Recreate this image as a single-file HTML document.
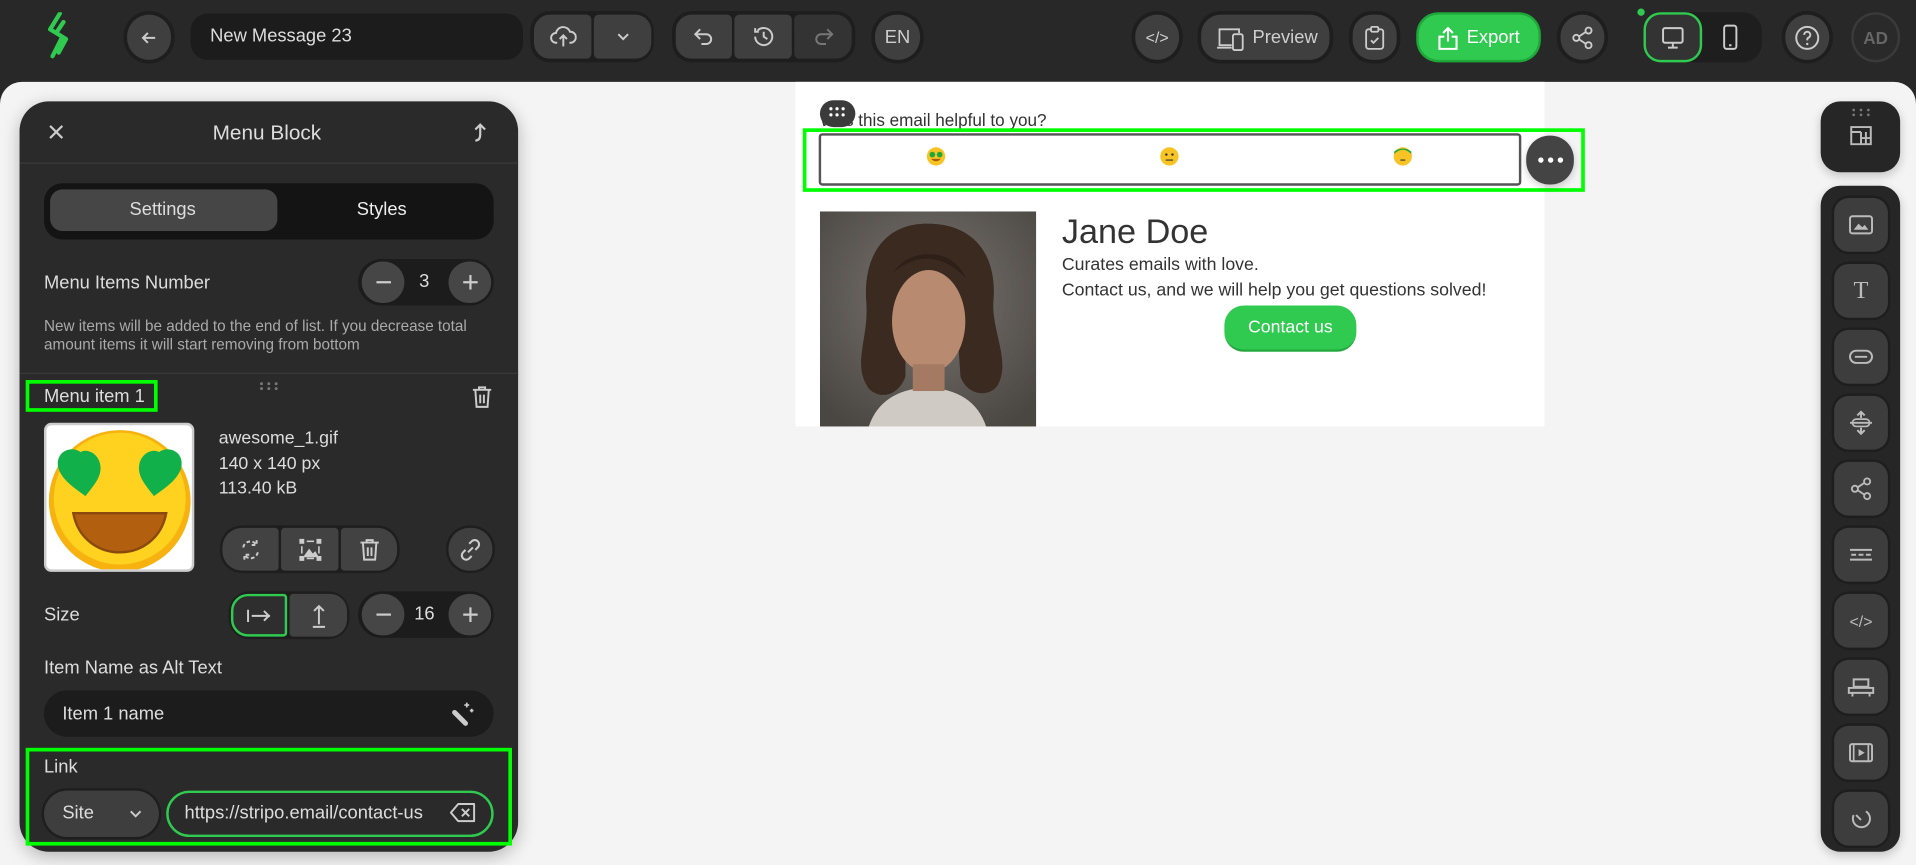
<!DOCTYPE html>
<html><head><meta charset="utf-8"><style>
*{box-sizing:border-box;margin:0;padding:0}
html,body{width:1916px;height:865px;overflow:hidden;background:#282828}
#root{position:absolute;left:0;top:0;width:1568px;height:708px;transform:scale(1.221939);transform-origin:0 0;background:#282828;font-family:"Liberation Sans",Arial,sans-serif;color:#ddd}
.a{position:absolute}
.btn{position:absolute;background:#3f3f3f;border-radius:14px;box-shadow:0 0 0 3px #1e1e1e;display:flex;align-items:center;justify-content:center;color:#cfcfcf}
.grp{position:absolute;background:#1e1e1e;border-radius:16px}
.t{position:absolute;white-space:nowrap}
svg{display:block}
.sb{position:absolute;left:1501px;width:44px;height:44px;background:#3d3d3d;border-radius:12px;box-shadow:0 0 0 2px #1e1e1e;display:flex;align-items:center;justify-content:center}
</style></head><body><div id="root">
<!-- top bar -->
<svg class="a" style="left:38px;top:10px" width="20" height="38" viewBox="0 0 20 38"><path d="M11 1 L3 14 L13 20 L5 36 M14 8 L8 17 L16 22 L10 33" stroke="#2fca4f" stroke-width="3.5" fill="none" stroke-linecap="round" stroke-linejoin="round"/></svg>
<div class="btn" style="left:104px;top:12px;width:36px;height:37px;border-radius:18px"><svg width="14" height="14" viewBox="0 0 14 14"><path d="M12 7H2M6 3L2 7l4 4" stroke="#ccc" stroke-width="1.6" fill="none"/></svg></div>
<div class="a" style="left:156px;top:11px;width:272px;height:38px;background:#1c1c1c;border-radius:14px"></div>
<div class="t" style="left:172px;top:21px;font-size:15px;color:#ddd">New Message 23</div>
<div class="grp" style="left:434px;top:9px;width:101px;height:42px"></div>
<div class="btn" style="left:437px;top:12px;width:47px;height:36px;box-shadow:none;border-radius:13px 4px 4px 13px"><svg width="22" height="20" viewBox="0 0 22 20"><path d="M6 15H5a4 4 0 0 1 0-8 6 6 0 0 1 11.5-1A4.5 4.5 0 0 1 17 15h-1M11 18V9M8 12l3-3 3 3" stroke="#ccc" stroke-width="1.6" fill="none"/></svg></div>
<div class="btn" style="left:486px;top:12px;width:47px;height:36px;box-shadow:none;border-radius:4px 13px 13px 4px"><svg width="12" height="8" viewBox="0 0 12 8"><path d="M2 2l4 4 4-4" stroke="#ccc" stroke-width="1.6" fill="none"/></svg></div>
<div class="grp" style="left:550px;top:9px;width:150px;height:42px"></div>
<div class="btn" style="left:553px;top:12px;width:46px;height:36px;box-shadow:none;border-radius:13px 4px 4px 13px"><svg width="18" height="18" viewBox="0 0 18 18"><path d="M6 3L2 7l4 4M2 7h9a4 4 0 0 1 0 8H7" stroke="#ccc" stroke-width="1.6" fill="none"/></svg></div>
<div class="btn" style="left:601px;top:12px;width:47px;height:36px;box-shadow:none;border-radius:4px"><svg width="20" height="20" viewBox="0 0 20 20"><path d="M3 10a7 7 0 1 0 2-5M3 3v3h3M10 6v4l3 2" stroke="#ccc" stroke-width="1.6" fill="none"/></svg></div>
<div class="btn" style="left:650px;top:12px;width:47px;height:36px;box-shadow:none;border-radius:4px 13px 13px 4px;background:#333"><svg width="18" height="18" viewBox="0 0 18 18"><path d="M12 3l4 4-4 4M16 7H7a4 4 0 0 0 0 8h4" stroke="#777" stroke-width="1.6" fill="none"/></svg></div>
<div class="btn" style="left:716px;top:12px;width:37px;height:37px;border-radius:18px;font-size:15px">EN</div>

<div class="btn" style="left:929px;top:12px;width:36px;height:37px;border-radius:18px;font-size:13px">&lt;/&gt;</div>
<div class="btn" style="left:983px;top:12px;width:105px;height:37px;border-radius:16px;font-size:15px;justify-content:flex-start;padding-left:12px"><svg width="24" height="22" viewBox="0 0 24 22" style="margin-right:6px"><path d="M13 17H3V4h16v3M1 19h12" stroke="#ccc" stroke-width="1.5" fill="none"/><rect x="14" y="8" width="8" height="13" rx="1.5" stroke="#ccc" stroke-width="1.5" fill="none"/></svg>Preview</div>
<div class="btn" style="left:1107px;top:12px;width:36px;height:37px;border-radius:16px"><svg width="16" height="20" viewBox="0 0 16 20"><rect x="1" y="3" width="14" height="16" rx="2" stroke="#ccc" stroke-width="1.5" fill="none"/><rect x="5" y="1" width="6" height="4" rx="1" stroke="#ccc" stroke-width="1.5" fill="#3f3f3f"/><path d="M5 12l2 2 4-4" stroke="#ccc" stroke-width="1.5" fill="none"/></svg></div>
<div class="btn" style="left:1161px;top:12px;width:98px;height:37px;border-radius:16px;background:#2fca4f;box-shadow:0 0 0 2px #1fa83a;color:#fff;font-size:15px"><svg width="18" height="20" viewBox="0 0 18 20" style="margin-right:6px"><path d="M9 13V2M5 6l4-4 4 4M6 9H2v10h14V9h-4" stroke="#fff" stroke-width="1.7" fill="none"/></svg>Export</div>
<div class="btn" style="left:1277px;top:12px;width:36px;height:37px;border-radius:18px"><svg width="20" height="20" viewBox="0 0 20 20"><circle cx="15" cy="4" r="2.5" stroke="#ccc" stroke-width="1.5" fill="none"/><circle cx="5" cy="10" r="2.5" stroke="#ccc" stroke-width="1.5" fill="none"/><circle cx="15" cy="16" r="2.5" stroke="#ccc" stroke-width="1.5" fill="none"/><path d="M7 9l6-4M7 11l6 4" stroke="#ccc" stroke-width="1.5"/></svg></div>
<div class="a" style="left:1340px;top:7px;width:6px;height:6px;border-radius:3px;background:#2fca4f"></div>
<div class="grp" style="left:1345px;top:10px;width:97px;height:41px"></div>
<div class="btn" style="left:1347px;top:12px;width:44px;height:37px;border-radius:12px;background:#333;box-shadow:0 0 0 2px #2fca4f"><svg width="20" height="20" viewBox="0 0 20 20"><rect x="2" y="2" width="16" height="12" rx="1.5" stroke="#ccc" stroke-width="1.6" fill="none"/><path d="M10 14v4M6 18h8" stroke="#ccc" stroke-width="1.6"/></svg></div>
<div class="a" style="left:1409px;top:20px"><svg width="14" height="22" viewBox="0 0 14 22"><rect x="2" y="1" width="10" height="19" rx="2" stroke="#ccc" stroke-width="1.6" fill="none"/><path d="M6 17h2" stroke="#ccc" stroke-width="1.6"/></svg></div>
<div class="btn" style="left:1461px;top:12px;width:36px;height:37px;border-radius:18px"><svg width="22" height="22" viewBox="0 0 22 22"><circle cx="11" cy="11" r="9" stroke="#ccc" stroke-width="1.6" fill="none"/><path d="M8.5 8.5a2.5 2.5 0 1 1 3.5 2.3c-.7.4-1 .9-1 1.7v.5" stroke="#ccc" stroke-width="1.6" fill="none"/><circle cx="11" cy="16" r="1" fill="#ccc"/></svg></div>
<div class="btn" style="left:1517px;top:12px;width:36px;height:37px;border-radius:18px;background:#2a2a2a;box-shadow:0 0 0 2px #3a3a3a;color:#666;font-size:14px;font-weight:bold">AD</div>

<!-- canvas -->
<div class="a" style="left:0;top:67px;width:1568px;height:641px;background:#f4f4f4;border-radius:18px 18px 0 0"></div>

<!-- email -->
<div class="a" style="left:651px;top:67px;width:613px;height:282px;background:#fff"></div>
<div class="t" style="left:671px;top:90px;font-size:14px;color:#333">Was this email helpful to you?</div>
<div class="a" style="left:671px;top:82px;width:29px;height:22px;border-radius:11px;background:#3b3b3b"></div>
<svg class="a" style="left:678px;top:87px" width="14" height="10"><g fill="#fff"><circle cx="2" cy="2" r="1.3"/><circle cx="7" cy="2" r="1.3"/><circle cx="12" cy="2" r="1.3"/><circle cx="2" cy="7" r="1.3"/><circle cx="7" cy="7" r="1.3"/><circle cx="12" cy="7" r="1.3"/></g></svg>
<div class="a" style="left:657px;top:105px;width:640px;height:52px;border:3px solid #00ff00"></div>
<div class="a" style="left:670px;top:109px;width:575px;height:43px;border:2px solid #555;border-radius:3px"></div>
<svg class="a" style="left:758px;top:120px" width="16" height="16"><circle cx="8" cy="8" r="7.5" fill="#f7c325"/><circle cx="5" cy="6.5" r="2.3" fill="#1fa83a"/><circle cx="11" cy="6.5" r="2.3" fill="#1fa83a"/><path d="M4 10q4 4 8 0z" fill="#a55c12"/></svg>
<svg class="a" style="left:949px;top:120px" width="16" height="16"><circle cx="8" cy="8" r="7.5" fill="#f7c325"/><circle cx="5.5" cy="6.5" r="1" fill="#333"/><circle cx="10.5" cy="6.5" r="1" fill="#333"/><path d="M5 11h6" stroke="#333" stroke-width="1"/></svg>
<svg class="a" style="left:1140px;top:120px" width="16" height="16"><circle cx="8" cy="8" r="7.5" fill="#f7c325"/><path d="M1 6q7-7 14 0v-2q-7-5-14 0z" fill="#1fa83a"/><path d="M6 11h4" stroke="#333" stroke-width="1"/></svg>
<div class="a" style="left:1249px;top:111px;width:39px;height:40px;border-radius:19px;background:#444;box-shadow:0 2px 6px rgba(0,0,0,.2)"></div>
<svg class="a" style="left:1258px;top:128px" width="22" height="6"><g fill="#fff"><circle cx="3" cy="3" r="2.2"/><circle cx="11" cy="3" r="2.2"/><circle cx="19" cy="3" r="2.2"/></g></svg>
<svg class="a" style="left:671px;top:173px" width="177" height="176" viewBox="0 0 177 176">
<defs><radialGradient id="bg" cx="50%" cy="40%" r="70%"><stop offset="0" stop-color="#7a7570"/><stop offset="1" stop-color="#4a4642"/></radialGradient></defs>
<rect width="177" height="176" fill="url(#bg)"/>
<path d="M88 10C50 10 35 40 38 75c2 30-12 50 2 70 10 10 25 5 30-10L70 60h40l5 75c5 15 22 18 30 8 12-20-5-45-3-70 3-35-14-63-54-63z" fill="#3a2a20"/>
<ellipse cx="89" cy="90" rx="30" ry="42" fill="#b88a70"/>
<path d="M60 50q30-25 60 5q-10-20-30-20q-20 0-30 15z" fill="#2e2018"/>
<path d="M40 176q10-30 48-32q38 2 48 32z" fill="#cfcac4"/>
<rect x="76" y="125" width="26" height="22" fill="#a47a62"/>
</svg>
<div class="t" style="left:869px;top:174px;font-size:28px;color:#333">Jane Doe</div>
<div class="t" style="left:869px;top:209px;font-size:14.5px;color:#333">Curates emails with love.</div>
<div class="t" style="left:869px;top:230px;font-size:14.5px;color:#333">Contact us, and we will help you get questions solved!</div>
<div class="a" style="left:1002px;top:250px;width:108px;height:38px;border-radius:16px;background:#2fca4f;border-bottom:2px solid #23a83e;color:#fff;font-size:14.5px;display:flex;align-items:center;justify-content:center">Contact us</div>

<!-- left panel -->
<div class="a" style="left:16px;top:83px;width:408px;height:614px;background:#2a2a2a;border-radius:24px;box-shadow:0 4px 14px rgba(0,0,0,.25)"></div>
<svg class="a" style="left:40px;top:102px" width="12" height="12"><path d="M1 1l10 10M11 1L1 11" stroke="#ccc" stroke-width="1.8"/></svg>
<div class="t" style="left:174px;top:99px;font-size:17px;color:#ddd">Menu Block</div>
<svg class="a" style="left:386px;top:99px" width="14" height="18"><path d="M3 16c3 0 4-2 4-5V3M3 7l4-4 4 4" stroke="#ccc" stroke-width="1.8" fill="none"/></svg>
<div class="a" style="left:16px;top:133px;width:408px;height:1px;background:#3a3a3a"></div>
<div class="a" style="left:36px;top:150px;width:368px;height:46px;background:#141414;border-radius:15px"></div>
<div class="a" style="left:41px;top:155px;width:186px;height:34px;background:#464646;border-radius:10px"></div>
<div class="t" style="left:106px;top:163px;font-size:15px;color:#ddd">Settings</div>
<div class="t" style="left:292px;top:163px;font-size:15px;color:#eee">Styles</div>

<div class="t" style="left:36px;top:223px;font-size:15px;color:#ddd">Menu Items Number</div>
<div class="a" style="left:293px;top:212px;width:111px;height:38px;background:#1c1c1c;border-radius:19px"></div>
<div class="btn" style="left:296px;top:214px;width:35px;height:34px;border-radius:17px;box-shadow:none;background:#464646"><svg width="12" height="2"><path d="M0 1h12" stroke="#ccc" stroke-width="1.8"/></svg></div>
<div class="t" style="left:343px;top:222px;font-size:15px;color:#ddd">3</div>
<div class="btn" style="left:367px;top:214px;width:35px;height:34px;border-radius:17px;box-shadow:none;background:#464646"><svg width="12" height="12"><path d="M0 6h12M6 0v12" stroke="#ccc" stroke-width="1.8"/></svg></div>
<div class="t" style="left:36px;top:260px;font-size:12.5px;color:#aaa;line-height:15px">New items will be added to the end of list. If you decrease total<br>amount items it will start removing from bottom</div>
<div class="a" style="left:16px;top:305px;width:408px;height:1px;background:#3a3a3a"></div>

<div class="a" style="left:21px;top:311px;width:108px;height:26px;border:3px solid #00ff00"></div>
<div class="t" style="left:36px;top:316px;font-size:15px;color:#ddd">Menu item 1</div>
<svg class="a" style="left:212px;top:312px" width="16" height="8"><g fill="#777"><circle cx="2" cy="2" r="1.2"/><circle cx="8" cy="2" r="1.2"/><circle cx="14" cy="2" r="1.2"/><circle cx="2" cy="6" r="1.2"/><circle cx="8" cy="6" r="1.2"/><circle cx="14" cy="6" r="1.2"/></g></svg>
<svg class="a" style="left:386px;top:315px" width="17" height="20" viewBox="0 0 17 20"><path d="M1 4h15M6 4V2h5v2M3 4l1 14h9l1-14M7 8v7M10 8v7" stroke="#ccc" stroke-width="1.6" fill="none"/></svg>

<div class="a" style="left:36px;top:346px;width:123px;height:122px;background:#fff;border:2px solid #ccc;border-radius:6px;overflow:hidden">
<svg width="120" height="118" viewBox="0 0 120 118"><circle cx="60" cy="62" r="58" fill="#f7b20f"/><circle cx="60" cy="60" r="54" fill="#ffd21f"/><path d="M28 22c-8-6-22 0-18 14 4 10 14 16 22 22 6-8 14-16 12-26-2-10-12-13-16-10z" fill="#12b04a"/><path d="M92 22c8-6 22 0 18 14-4 10-14 16-22 22-6-8-14-16-12-26 2-10 12-13 16-10z" fill="#12b04a"/><path d="M22 72h76c-4 22-22 32-38 32S26 94 22 72z" fill="#b35f10" stroke="#8a4a0e" stroke-width="2"/></svg></div>
<div class="t" style="left:179px;top:349px;font-size:14.5px;color:#ddd;line-height:20.5px">awesome_1.gif<br>140 x 140 px<br>113.40 kB</div>

<div class="grp" style="left:180px;top:430px;width:147px;height:39px;border-radius:18px"></div>
<div class="btn" style="left:182px;top:432px;width:46px;height:35px;box-shadow:none;border-radius:16px 3px 3px 16px;background:#424242"><svg width="20" height="20" viewBox="0 0 20 20"><path d="M4 8a6 6 0 0 1 11-2M16 12a6 6 0 0 1-11 2M15 2v4h-4M5 18v-4h4" stroke="#ccc" stroke-width="1.6" fill="none" stroke-dasharray="3 2"/></svg></div>
<div class="btn" style="left:230px;top:432px;width:47px;height:35px;box-shadow:none;border-radius:3px;background:#424242"><svg width="20" height="20" viewBox="0 0 20 20"><g fill="#ccc"><rect x="1" y="1" width="4" height="4"/><rect x="15" y="1" width="4" height="4"/><rect x="1" y="15" width="4" height="4"/><rect x="15" y="15" width="4" height="4"/></g><path d="M4 16l5-7 3 4 2-2 3 5z" fill="#ccc"/><path d="M7 3h6M7 17h6M3 7v6M17 7v6" stroke="#ccc" stroke-width="1.3"/></svg></div>
<div class="btn" style="left:279px;top:432px;width:46px;height:35px;box-shadow:none;border-radius:3px 16px 16px 3px;background:#424242"><svg width="17" height="20" viewBox="0 0 17 20"><path d="M1 4h15M6 4V2h5v2M3 4l1 14h9l1-14M7 8v7M10 8v7" stroke="#ccc" stroke-width="1.6" fill="none"/></svg></div>
<div class="btn" style="left:367px;top:432px;width:36px;height:35px;border-radius:17px;box-shadow:0 0 0 2px #1e1e1e"><svg width="20" height="20" viewBox="0 0 20 20"><path d="M8 12l4-4M9 5l2-2a3.5 3.5 0 0 1 5 5l-2 2M11 15l-2 2a3.5 3.5 0 0 1-5-5l2-2" stroke="#ccc" stroke-width="1.7" fill="none"/></svg></div>

<div class="t" style="left:36px;top:495px;font-size:15px;color:#ddd">Size</div>
<div class="grp" style="left:187px;top:484px;width:99px;height:39px;border-radius:17px"></div>
<div class="btn" style="left:189px;top:486px;width:46px;height:35px;box-shadow:none;border:2px solid #2fca4f;border-radius:14px 3px 3px 14px;background:#2e2e2e"><svg width="22" height="12" viewBox="0 0 22 12"><path d="M2 1v10M5 6h15M15 2l4 4-4 4" stroke="#ccc" stroke-width="1.6" fill="none"/></svg></div>
<div class="btn" style="left:237px;top:486px;width:47px;height:35px;box-shadow:none;border-radius:3px 14px 14px 3px;background:#424242"><svg width="12" height="22" viewBox="0 0 12 22"><path d="M6 18V3M2 7l4-4 4 4M1 20h10" stroke="#ccc" stroke-width="1.6" fill="none"/></svg></div>
<div class="a" style="left:293px;top:484px;width:111px;height:38px;background:#1c1c1c;border-radius:19px"></div>
<div class="btn" style="left:296px;top:486px;width:35px;height:34px;border-radius:17px;box-shadow:none;background:#464646"><svg width="12" height="2"><path d="M0 1h12" stroke="#ccc" stroke-width="1.8"/></svg></div>
<div class="t" style="left:339px;top:494px;font-size:15px;color:#ddd">16</div>
<div class="btn" style="left:367px;top:486px;width:35px;height:34px;border-radius:17px;box-shadow:none;background:#464646"><svg width="12" height="12"><path d="M0 6h12M6 0v12" stroke="#ccc" stroke-width="1.8"/></svg></div>

<div class="t" style="left:36px;top:538px;font-size:15px;color:#ddd">Item Name as Alt Text</div>
<div class="a" style="left:36px;top:565px;width:368px;height:38px;background:#1c1c1c;border-radius:19px"></div>
<div class="t" style="left:51px;top:576px;font-size:15px;color:#ddd">Item 1 name</div>
<svg class="a" style="left:368px;top:573px" width="22" height="22" viewBox="0 0 22 22"><path d="M4 10l9 9" stroke="#ccc" stroke-width="4" stroke-linecap="round"/><path d="M14 2v4M12 4h4M18 7v3M16.5 8.5h3" stroke="#ccc" stroke-width="1.4"/></svg>

<div class="a" style="left:21px;top:612px;width:398px;height:80px;border:3px solid #00ff00"></div>
<div class="t" style="left:36px;top:619px;font-size:15px;color:#ddd">Link</div>
<div class="a" style="left:36px;top:647px;width:94px;height:38px;background:#3e3e3e;border-radius:19px;box-shadow:0 0 0 2px #1e1e1e"></div>
<div class="t" style="left:51px;top:657px;font-size:15px;color:#ddd">Site</div>
<svg class="a" style="left:105px;top:662px" width="12" height="8"><path d="M2 2l4 4 4-4" stroke="#ccc" stroke-width="1.6" fill="none"/></svg>
<div class="a" style="left:136px;top:647px;width:268px;height:38px;border:2px solid #2fca4f;border-radius:19px;background:#2a2a2a"></div>
<div class="a" style="left:151px;top:657px;width:204px;overflow:hidden;white-space:nowrap;font-size:15px;color:#ddd">https://stripo.email/contact-us</div>
<svg class="a" style="left:368px;top:657px" width="22" height="16" viewBox="0 0 22 16"><path d="M7 1h13v14H7L1 8z" stroke="#ccc" stroke-width="1.6" fill="none" stroke-linejoin="round"/><path d="M10 5l6 6M16 5l-6 6" stroke="#ccc" stroke-width="1.6"/></svg>

<!-- right sidebar -->
<div class="a" style="left:1490px;top:83px;width:65px;height:58px;background:#262626;border-radius:16px;box-shadow:0 3px 8px rgba(0,0,0,.2)"></div>
<svg class="a" style="left:1515px;top:88px" width="16" height="8"><g fill="#777"><circle cx="2" cy="2" r="1.1"/><circle cx="8" cy="2" r="1.1"/><circle cx="14" cy="2" r="1.1"/><circle cx="2" cy="6" r="1.1"/><circle cx="8" cy="6" r="1.1"/><circle cx="14" cy="6" r="1.1"/></g></svg>
<svg class="a" style="left:1514px;top:102px" width="18" height="18" viewBox="0 0 18 18"><path d="M1 2h16v14H1zM1 6h8M9 6v10M9 11h8M13 6v10" stroke="#bbb" stroke-width="1.6" fill="none"/></svg>
<div class="a" style="left:1490px;top:152px;width:65px;height:545px;background:#262626;border-radius:16px;box-shadow:0 3px 8px rgba(0,0,0,.2)"></div>
<div class="sb" style="top:162px"><svg width="20" height="16" viewBox="0 0 20 16"><rect x="1" y="1" width="18" height="14" rx="2" stroke="#bbb" stroke-width="1.6" fill="none"/><path d="M4 12l4-5 3 3 2-2 3 4z" fill="#bbb"/></svg></div>
<div class="sb" style="top:216px;font-family:'Liberation Serif',serif;font-size:20px;color:#bbb">T</div>
<div class="sb" style="top:270px"><svg width="20" height="12" viewBox="0 0 20 12"><rect x="1" y="1" width="18" height="10" rx="5" stroke="#bbb" stroke-width="1.6" fill="none"/><path d="M5 6h10" stroke="#bbb" stroke-width="1.6"/></svg></div>
<div class="sb" style="top:324px"><svg width="20" height="20" viewBox="0 0 20 20"><path d="M1 10h18M10 1v5M7 4l3-3 3 3M10 19v-5M7 16l3 3 3-3" stroke="#bbb" stroke-width="1.6" fill="none"/><rect x="3" y="7" width="14" height="6" rx="3" stroke="#bbb" stroke-width="1.4" fill="none"/></svg></div>
<div class="sb" style="top:378px"><svg width="20" height="20" viewBox="0 0 20 20"><circle cx="15" cy="4" r="2.5" stroke="#bbb" stroke-width="1.5" fill="none"/><circle cx="5" cy="10" r="2.5" stroke="#bbb" stroke-width="1.5" fill="none"/><circle cx="15" cy="16" r="2.5" stroke="#bbb" stroke-width="1.5" fill="none"/><path d="M7 9l6-4M7 11l6 4" stroke="#bbb" stroke-width="1.5"/></svg></div>
<div class="sb" style="top:432px"><svg width="20" height="12" viewBox="0 0 20 12"><path d="M1 2h18M1 10h18M2 6h4M8 6h4M14 6h4" stroke="#bbb" stroke-width="1.6"/></svg></div>
<div class="sb" style="top:486px;font-size:13px;color:#bbb">&lt;/&gt;</div>
<div class="sb" style="top:540px"><svg width="22" height="18" viewBox="0 0 22 18"><path d="M5 3h12v6H5zM1 10h20v4H1zM4 14v3M18 14v3" stroke="#bbb" stroke-width="1.6" fill="none"/></svg></div>
<div class="sb" style="top:594px"><svg width="20" height="16" viewBox="0 0 20 16"><rect x="1" y="1" width="18" height="14" rx="1.5" stroke="#bbb" stroke-width="1.6" fill="none"/><path d="M4 1v14M16 1v14" stroke="#bbb" stroke-width="1.4"/><path d="M8 5l5 3-5 3z" fill="#bbb"/></svg></div>
<div class="sb" style="top:648px"><svg width="20" height="20" viewBox="0 0 20 20"><path d="M14 4a7 7 0 1 1-10 3" stroke="#bbb" stroke-width="1.6" fill="none"/><path d="M6 7l4 4" stroke="#bbb" stroke-width="1.6"/></svg></div>
</div></body></html>
